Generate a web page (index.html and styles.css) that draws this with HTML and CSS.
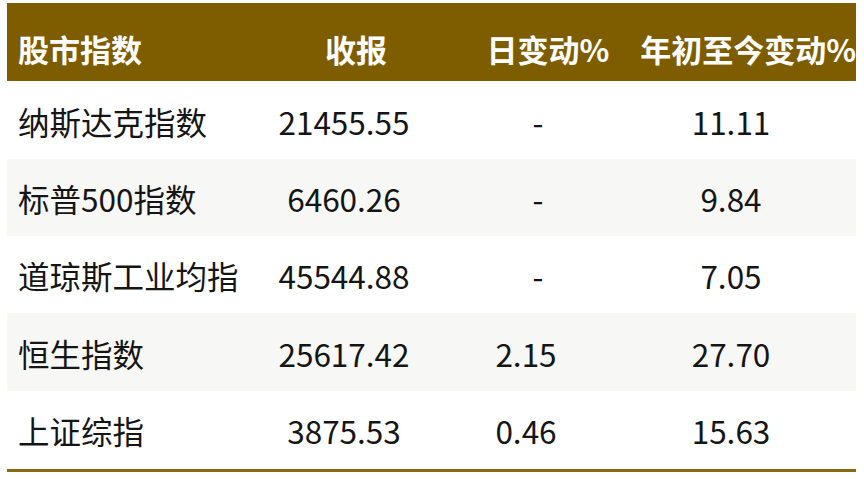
FILE: index.html
```html
<!DOCTYPE html>
<html lang="zh-CN">
<head>
<meta charset="utf-8">
<title>股市指数</title>
<link rel="stylesheet" href="styles.css">
</head>
<body>
<div class="wrap">
  <div class="table">
    <div class="row head">
      <div class="cell c1">股市指数</div>
      <div class="cell c2 h2">收报</div>
      <div class="cell c3 h3">日变动%</div>
      <div class="cell c4 h4">年初至今变动%</div>
    </div>
    <div class="row r-tall">
      <div class="cell c1">纳斯达克指数</div>
      <div class="cell c2">21455.55</div>
      <div class="cell c3 dash">-</div>
      <div class="cell c4">11.11</div>
    </div>
    <div class="row alt">
      <div class="cell c1">标普500指数</div>
      <div class="cell c2">6460.26</div>
      <div class="cell c3 dash">-</div>
      <div class="cell c4">9.84</div>
    </div>
    <div class="row">
      <div class="cell c1">道琼斯工业均指</div>
      <div class="cell c2">45544.88</div>
      <div class="cell c3 dash">-</div>
      <div class="cell c4">7.05</div>
    </div>
    <div class="row alt r-tall">
      <div class="cell c1">恒生指数</div>
      <div class="cell c2">25617.42</div>
      <div class="cell c3">2.15</div>
      <div class="cell c4">27.70</div>
    </div>
    <div class="row">
      <div class="cell c1">上证综指</div>
      <div class="cell c2">3875.53</div>
      <div class="cell c3">0.46</div>
      <div class="cell c4">15.63</div>
    </div>
    <div class="rule"></div>
  </div>
</div>
</body>
</html>
```

FILE: styles.css
```css
html, body {
  margin: 0;
  padding: 0;
  background: #ffffff;
}

.wrap {
  padding: 3px 8px 0 7px;
  width: 849px;
}

.table {
  display: flex;
  flex-direction: column;
  font-family: "Noto Sans CJK SC", "Noto Sans", sans-serif;
  color: #151515;
}

.row {
  display: grid;
  grid-template-columns: 247px 180px 184px 238px;
  height: 77px;
  background: #ffffff;
  font-size: 31.5px;
  line-height: 1;
}

.row.r-tall {
  height: 78px;
}

.row.alt {
  background: #f7f7f5;
}

.row.head {
  height: 78px;
  background: #7e5c00;
  color: #ffffff;
  font-weight: 700;
  font-size: 31px;
}

.cell {
  display: flex;
  align-items: center;
  justify-content: center;
  white-space: nowrap;
  padding-top: 3px;
}

.head .cell {
  padding-top: 12px;
}

.cell.c1 {
  justify-content: flex-start;
  padding-left: 11px;
}

.cell.c4 {
  padding-right: 12px;
}

.cell.dash {
  padding-left: 24px;
}

.cell.h2 {
  padding-left: 24px;
}

.cell.h3 {
  padding-left: 44px;
}

.cell.h4 {
  justify-content: flex-end;
  padding-right: 0;
}

.rule {
  margin-top: 1px;
  height: 3px;
  background: #8a6810;
}
```
